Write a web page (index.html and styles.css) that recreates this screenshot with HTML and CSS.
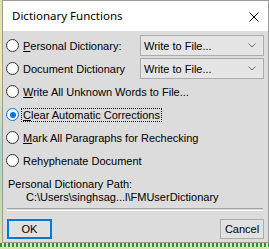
FILE: index.html
```html
<!DOCTYPE html>
<html>
<head>
<meta charset="utf-8">
<link rel="stylesheet" href="styles.css">
</head>
<body>
<div class="window">
  <div class="titlebar">
    <span class="title">Dictionary Functions</span>
    <svg class="close" width="10" height="10" viewBox="0 0 10 10"><path d="M0.5 0.5 L9.5 9.5 M9.5 0.5 L0.5 9.5" stroke="#000" stroke-width="1"/></svg>
  </div>
  <div class="client">
    <div class="options">
      <div class="row">
        <span class="radio"></span><span class="label"><u>P</u>ersonal Dictionary:</span>
        <div class="combo"><span>Write to File...</span><svg width="8" height="5" viewBox="0 0 8 5"><path d="M0.5 0.5 L4 4 L7.5 0.5" fill="none" stroke="#6a6a6a"/></svg></div>
      </div>
      <div class="row">
        <span class="radio"></span><span class="label">Document Dictionary</span>
        <div class="combo"><span>Write to File...</span><svg width="8" height="5" viewBox="0 0 8 5"><path d="M0.5 0.5 L4 4 L7.5 0.5" fill="none" stroke="#6a6a6a"/></svg></div>
      </div>
      <div class="row">
        <span class="radio"></span><span class="label"><u>W</u>rite All Unknown Words to File...</span>
      </div>
      <div class="row">
        <span class="radio checked"></span><span class="label focus"><u>C</u>lear Automatic Corrections</span>
      </div>
      <div class="row">
        <span class="radio"></span><span class="label"><u>M</u>ark All Paragraphs for Rechecking</span>
      </div>
      <div class="row">
        <span class="radio"></span><span class="label">Rehyphenate Document</span>
      </div>
    </div>
    <div class="path">
      <div>Personal Dictionary Path:</div>
      <div class="path-value">C:\Users\singhsag...l\FMUserDictionary</div>
    </div>
    <div class="separator"></div>
    <div class="buttons">
      <button class="btn default">OK</button>
      <button class="btn">Cancel</button>
    </div>
  </div>
</div>
<div class="under"></div>
</body>
</html>
```
FILE: styles.css
```css
html, body {
  margin: 0;
  padding: 0;
  width: 269px;
  height: 249px;
  overflow: hidden;
}
body {
  background: linear-gradient(to bottom, #d9e6a0 0, #f4e9a8 30%, #a9d4c8 60%, #e0e0a0 100%);
  font-family: "Liberation Sans", Arial, sans-serif;
  font-size: 11px;
  color: #000;
}
.window {
  margin-left: 2px;
  width: 265px;
  border: 1px solid #9a9a9a;
  background: #dcdcdc;
}
.titlebar {
  height: 30px;
  background: #fff;
  display: flex;
  align-items: center;
  justify-content: space-between;
  padding: 0 9px 0 9px;
}
.title {
  font-family: "Noto Sans", sans-serif;
  font-size: 11.5px;
  margin-top: -1px;
}
.close {
  display: block;
  margin-top: 1px;
}
.client {
  padding: 3px 3px 3px 3px;
}
.options {
  display: flex;
  flex-direction: column;
}
.row {
  height: 23px;
  display: flex;
  align-items: center;
}
.radio {
  width: 11px;
  height: 11px;
  border: 1px solid #333;
  border-radius: 50%;
  background: #fff;
  margin-left: 0;
  margin-right: 3px;
  flex: none;
  position: relative;
}
.radio.checked {
  border-color: #0078d7;
}
.radio.checked::after {
  content: "";
  position: absolute;
  left: 2.5px;
  top: 2.5px;
  width: 6px;
  height: 6px;
  border-radius: 50%;
  background: #0078d7;
}
.label {
  flex: 1;
  white-space: nowrap;
  padding: 0 1px;
  line-height: 12px;
}
.label.focus {
  flex: none;
  outline: 1px dotted #000;
  outline-offset: 0;
}
.combo {
  height: 19px;
  border: 1px solid #acacac;
  background: #e5e5e5;
  display: flex;
  align-items: center;
  justify-content: space-between;
  padding: 0 7px 0 3px;
  box-sizing: content-box;
  margin-right: 1px;
  width: 112px;
}
.combo svg {
  display: block;
}
.path {
  margin-top: 6px;
  padding-left: 2px;
  line-height: 13px;
}
.path-value {
  padding-left: 18px;
}
.separator {
  margin: 4px 2px 0 1px;
  height: 1px;
  border-top: 1px solid #a0a0a0;
  border-bottom: 1px solid #fff;
}
.buttons {
  display: flex;
  justify-content: space-between;
  padding: 8px 1px 0 1px;
}
.btn {
  font-family: "Liberation Sans", Arial, sans-serif;
  font-size: 11px;
  height: 20px;
  width: 44px;
  background: #e1e1e1;
  border: 1px solid #adadad;
  padding: 0;
  margin: 0;
  color: #000;
}
.btn.default {
  width: 45px;
  border: 2px solid #0078d7;
}
.under {
  height: 4px;
  background: repeating-linear-gradient(to right, #3a8a3a 0 2px, #dce8c0 2px 4px);
}
```
